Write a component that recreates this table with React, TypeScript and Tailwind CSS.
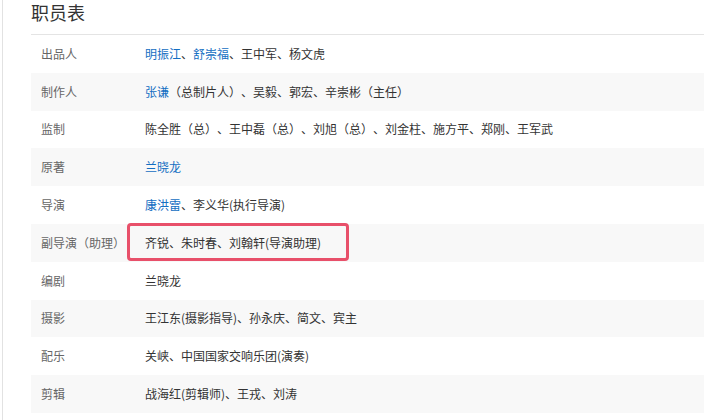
const rows: { label: string; value: { text: string; link?: boolean }[] }[] = [
  {
    label: "出品人",
    value: [
      { text: "明振江", link: true },
      { text: "、" },
      { text: "舒崇福", link: true },
      { text: "、王中军、杨文虎" },
    ],
  },
  {
    label: "制作人",
    value: [{ text: "张谦", link: true }, { text: "（总制片人）、吴毅、郭宏、辛崇彬（主任）" }],
  },
  {
    label: "监制",
    value: [{ text: "陈全胜（总）、王中磊（总）、刘旭（总）、刘金柱、施方平、郑刚、王军武" }],
  },
  { label: "原著", value: [{ text: "兰晓龙", link: true }] },
  {
    label: "导演",
    value: [{ text: "康洪雷", link: true }, { text: "、李义华(执行导演)" }],
  },
  { label: "副导演（助理）", value: [{ text: "齐锐、朱时春、刘翰轩(导演助理)" }] },
  { label: "编剧", value: [{ text: "兰晓龙" }] },
  { label: "摄影", value: [{ text: "王江东(摄影指导)、孙永庆、简文、宾主" }] },
  { label: "配乐", value: [{ text: "关峡、中国国家交响乐团(演奏)" }] },
  { label: "剪辑", value: [{ text: "战海红(剪辑师)、王戎、刘涛" }] },
];

export default function App() {
  return (
    <div
      className="h-[420px] w-[704px] overflow-hidden bg-white [text-spacing-trim:space-all]"
      style={{ fontFamily: '"Noto Sans CJK SC", "Noto Sans", sans-serif' }}
    >
      <div className="ml-[2px] h-full border-l border-[#e2e2e2] pl-[28px]">
        {/* 标题 */}
        <h2 className="h-[34px] pt-[1px] text-[18px] leading-[22px] text-[#333]">职员表</h2>
        <div className="border-t border-[#e4e4e4]">
          {rows.map((row, i) => (
            <div
              key={row.label}
              className={
                "relative flex h-[37.8px] items-center pl-[10px] text-[12px] " +
                (i % 2 === 1 ? "bg-[#f8f8f8]" : "bg-white")
              }
            >
              <div className="w-[104px] shrink-0 text-[#666]">{row.label}</div>
              <div className="text-[#333]">
                {row.value.map((v, j) =>
                  v.link ? (
                    <span key={j} className="text-[#136ec2]">
                      {v.text}
                    </span>
                  ) : (
                    <span key={j}>{v.text}</span>
                  )
                )}
              </div>
              {row.label === "副导演（助理）" && (
                <div className="absolute left-[96px] top-[-1px] h-[38px] w-[222px] rounded-[4px] border-[3px] border-[#e8506a]" />
              )}
            </div>
          ))}
        </div>
      </div>
    </div>
  );
}
